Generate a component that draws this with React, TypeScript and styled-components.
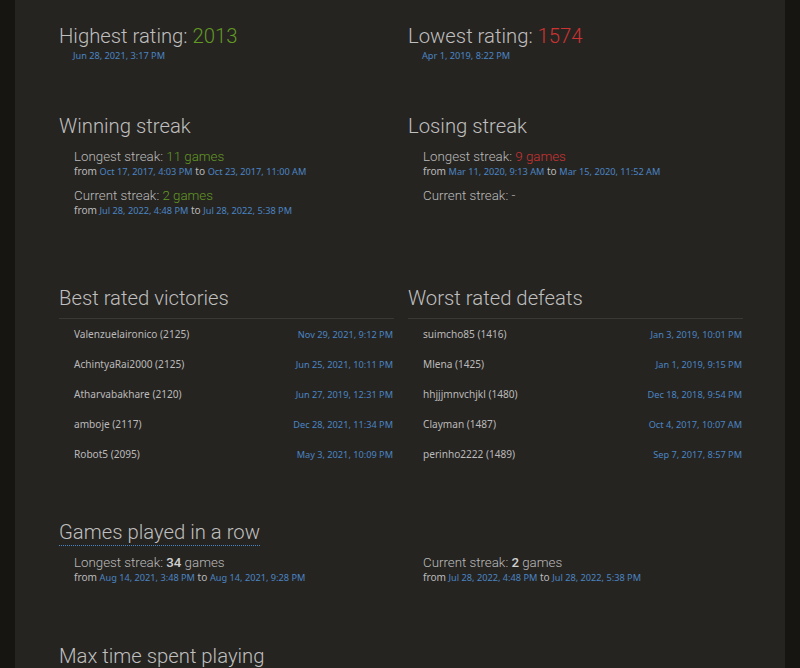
import React from "react";
import styled, { createGlobalStyle } from "styled-components";

const GlobalStyle = createGlobalStyle`
  html, body {
    margin: 0;
    padding: 0;
    background: #161512;
    color: #bababa;
    font-family: "Noto Sans", "Liberation Sans", sans-serif;
  }
`;

const Page = styled.div`
  display: flex;
  justify-content: center;
  height: 668px;
  overflow: hidden;
`;

const Panel = styled.main`
  width: 770px;
  background: #262421;
  padding: 24px 43px 40px 44px;
  box-sizing: border-box;
  min-height: 668px;
`;

const Split = styled.section<{ $top?: number }>`
  display: grid;
  grid-template-columns: 335px 335px;
  column-gap: 14px;
  margin-top: ${p => p.$top ?? 0}px;
`;

const Block = styled.div``;

const Heading = styled.h2<{ $dotted?: boolean }>`
  display: inline-block;
  margin: 0;
  font-family: Roboto, "Liberation Sans", sans-serif;
  font-weight: 300;
  font-size: 20.3px;
  line-height: 25px;
  color: #bfbfbf;
  border-bottom: ${p => (p.$dotted ? "1px dotted #4a84c3" : "none")};
`;

const HeadWrap = styled.div<{ $rule?: boolean }>`
  padding-bottom: ${p => (p.$rule ? 7 : 0)}px;
  border-bottom: ${p => (p.$rule ? "1px solid #3a3835" : "none")};
`;

const Spacer = styled.div`
  height: 26px;
`;

const Stamp = styled.span`
  font-size: 9.2px;
  color: #4a84c3;
`;

const StampLine = styled.div`
  padding-left: 14px;
  font-size: 9.2px;
  line-height: 13px;
`;

const Streak = styled.div<{ $gap?: number }>`
  padding-left: 15px;
  margin-top: ${p => p.$gap ?? 0}px;
`;

const StreakTitle = styled.div`
  font-family: Roboto, "Liberation Sans", sans-serif;
  font-weight: 300;
  font-size: 13.3px;
  line-height: 16px;
`;

const Num = styled.span<{ $tone?: "good" | "bad" | "plain" }>`
  color: ${p => (p.$tone === "good" ? "#629924" : p.$tone === "bad" ? "#cc3333" : "inherit")};
`;

const Strong = styled.b`
  font-weight: 500;
  color: #d0d0d0;
`;

const From = styled.div`
  font-size: 10.1px;
  line-height: 13px;
`;

const Rows = styled.div``;

const Row = styled.div`
  display: flex;
  justify-content: space-between;
  align-items: center;
  height: 30px;
  padding-left: 15px;
  padding-right: 1px;
  font-size: 10.1px;
`;

type StreakInfo = { label: string; n?: number; from?: string; to?: string };

const StreakItem = ({ s, tone, gap }: { s: StreakInfo; tone: "good" | "bad" | "plain"; gap?: number }) => (
  <Streak $gap={gap}>
    <StreakTitle>
      {s.label}:{" "}
      {s.n !== undefined ? (
        <Num $tone={tone}>
          {tone === "plain" ? <Strong>{s.n}</Strong> : s.n} games
        </Num>
      ) : (
        "-"
      )}
    </StreakTitle>
    {s.from && (
      <From>
        from <Stamp>{s.from}</Stamp> to <Stamp>{s.to}</Stamp>
      </From>
    )}
  </Streak>
);

const victories = [
  ["Valenzuelaironico (2125)", "Nov 29, 2021, 9:12 PM"],
  ["AchintyaRai2000 (2125)", "Jun 25, 2021, 10:11 PM"],
  ["Atharvabakhare (2120)", "Jun 27, 2019, 12:31 PM"],
  ["amboje (2117)", "Dec 28, 2021, 11:34 PM"],
  ["Robot5 (2095)", "May 3, 2021, 10:09 PM"],
];

const defeats = [
  ["suimcho85 (1416)", "Jan 3, 2019, 10:01 PM"],
  ["Mlena (1425)", "Jan 1, 2019, 9:15 PM"],
  ["hhjjjmnvchjkl (1480)", "Dec 18, 2018, 9:54 PM"],
  ["Clayman (1487)", "Oct 4, 2017, 10:07 AM"],
  ["perinho2222 (1489)", "Sep 7, 2017, 8:57 PM"],
];

const GameList = ({ title, items }: { title: string; items: string[][] }) => (
  <Block>
    <HeadWrap $rule>
      <Heading>{title}</Heading>
    </HeadWrap>
    <Rows>
      {items.map(([who, at]) => (
        <Row key={who}>
          <span>{who}</span>
          <Stamp>{at}</Stamp>
        </Row>
      ))}
    </Rows>
  </Block>
);

export default function App() {
  return (
    <>
      <GlobalStyle />
      <Page>
        <Panel>
          <Split>
            <Block>
              <Heading>
                Highest rating: <Num $tone="good">2013</Num>
              </Heading>
              <StampLine>
                <Stamp>Jun 28, 2021, 3:17 PM</Stamp>
              </StampLine>
            </Block>
            <Block>
              <Heading>
                Lowest rating: <Num $tone="bad">1574</Num>
              </Heading>
              <StampLine>
                <Stamp>Apr 1, 2019, 8:22 PM</Stamp>
              </StampLine>
            </Block>
          </Split>

          <Split $top={52}>
            <Block>
              <Heading>Winning streak</Heading>
              <StreakItem
                gap={10}
                tone="good"
                s={{ label: "Longest streak", n: 11, from: "Oct 17, 2017, 4:03 PM", to: "Oct 23, 2017, 11:00 AM" }}
              />
              <StreakItem
                gap={10}
                tone="good"
                s={{ label: "Current streak", n: 2, from: "Jul 28, 2022, 4:48 PM", to: "Jul 28, 2022, 5:38 PM" }}
              />
            </Block>
            <Block>
              <Heading>Losing streak</Heading>
              <StreakItem
                gap={10}
                tone="bad"
                s={{ label: "Longest streak", n: 9, from: "Mar 11, 2020, 9:13 AM", to: "Mar 15, 2020, 11:52 AM" }}
              />
              <StreakItem gap={10} tone="bad" s={{ label: "Current streak" }} />
            </Block>
          </Split>

          <Split $top={69}>
            <GameList title="Best rated victories" items={victories} />
            <GameList title="Worst rated defeats" items={defeats} />
          </Split>

          <Split $top={51}>
            <Block>
              <Heading $dotted>Games played in a row</Heading>
              <StreakItem
                gap={9}
                tone="plain"
                s={{ label: "Longest streak", n: 34, from: "Aug 14, 2021, 3:48 PM", to: "Aug 14, 2021, 9:28 PM" }}
              />
            </Block>
            <Block>
              <Spacer />
              <StreakItem
                gap={9}
                tone="plain"
                s={{ label: "Current streak", n: 2, from: "Jul 28, 2022, 4:48 PM", to: "Jul 28, 2022, 5:38 PM" }}
              />
            </Block>
          </Split>

          <Split $top={60}>
            <Block>
              <Heading>Max time spent playing</Heading>
            </Block>
          </Split>
        </Panel>
      </Page>
    </>
  );
}
